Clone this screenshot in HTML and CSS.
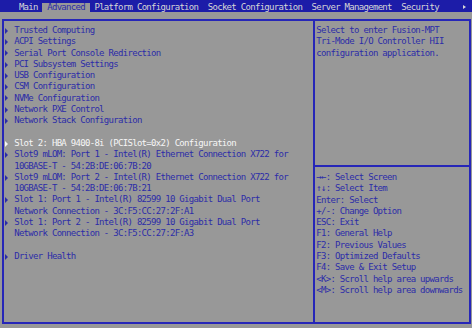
FILE: index.html
```html
<!DOCTYPE html>
<html lang="en">

<head>
    <meta charset="UTF-8">
    <title>Aptio Setup - Advanced</title>
    <link rel="stylesheet" href="styles.css">
</head>

<body>
    <div class="menubar">
        <span class="menu">    Main </span><span class="menu tab"> Advanced </span><span class="menu"> Platform Configuration  Socket Configuration  Server Management  Security     </span><span class="more"></span>
    </div>

    <div class="frame">
        <div class="left">
            <div class="item"><span class="arr"></span><span class="text">Trusted Computing</span></div>
            <div class="item"><span class="arr"></span><span class="text">ACPI Settings</span></div>
            <div class="item"><span class="arr"></span><span class="text">Serial Port Console Redirection</span></div>
            <div class="item"><span class="arr"></span><span class="text">PCI Subsystem Settings</span></div>
            <div class="item"><span class="arr"></span><span class="text">USB Configuration</span></div>
            <div class="item"><span class="arr"></span><span class="text">CSM Configuration</span></div>
            <div class="item"><span class="arr"></span><span class="text">NVMe Configuration</span></div>
            <div class="item"><span class="arr"></span><span class="text">Network PXE Control</span></div>
            <div class="item"><span class="arr"></span><span class="text">Network Stack Configuration</span></div>
            <div class="blank"></div>
            <div class="item active"><span class="arr"></span><span class="text">Slot 2: HBA 9400-8i (PCISlot=0x2) Configuration</span></div>
            <div class="item"><span class="arr"></span><span class="text">Slot9 mLOM: Port 1 - Intel(R) Ethernet Connection X722 for<br>10GBASE-T - 54:2B:DE:06:7B:20</span></div>
            <div class="item"><span class="arr"></span><span class="text">Slot9 mLOM: Port 2 - Intel(R) Ethernet Connection X722 for<br>10GBASE-T - 54:2B:DE:06:7B:21</span></div>
            <div class="item"><span class="arr"></span><span class="text">Slot 1: Port 1 - Intel(R) 82599 10 Gigabit Dual Port<br>Network Connection - 3C:F5:CC:27:2F:A1</span></div>
            <div class="item"><span class="arr"></span><span class="text">Slot 1: Port 2 - Intel(R) 82599 10 Gigabit Dual Port<br>Network Connection - 3C:F5:CC:27:2F:A3</span></div>
            <div class="blank"></div>
            <div class="item"><span class="arr"></span><span class="text">Driver Health</span></div>
        </div>

        <div class="right">
            <div class="help">Select to enter Fusion-MPT
Tri-Mode I/O Controller HII
configuration application.</div>
            <div class="keys">→←: Select Screen
↑↓: Select Item
Enter: Select
+/-: Change Option
ESC: Exit
F1: General Help
F2: Previous Values
F3: Optimized Defaults
F4: Save &amp; Exit Setup
&lt;K&gt;: Scroll help area upwards
&lt;M&gt;: Scroll help area downwards</div>
        </div>
    </div>
</body>

</html>
```

FILE: styles.css
```css
:root {
    --bios-grey: #989898;
    --bios-blue: #2c2ca8;
    --bios-bar: #1c1ca8;
    --bios-line: #2626b8;
    --bios-light: #d6d6d6;
    --bios-white: #f6f6f6;

    /* one text cell of the 100 column screen */
    --cell-w: 4.72px;
    --cell-h: 11.3px;
}

body {
    margin: 0;
    width: 472px;
    height: 328px;
    overflow: hidden;
    background: var(--bios-grey);
    color: var(--bios-blue);
    font-family: "DejaVu Sans Mono", monospace;
    font-size: 9px;
    letter-spacing: -0.698px;
    line-height: var(--cell-h);
}

.menubar {
    display: flex;
    height: 12px;
    padding-top: 2.7px;
    box-sizing: border-box;
    background: var(--bios-bar);
    color: var(--bios-light);
    white-space: pre;
}

.menu {
    height: 9.3px;
    line-height: 9.3px;
}

.tab {
    background: var(--bios-grey);
    color: var(--bios-blue);
}

.more {
    display: flex;
    align-items: center;
    justify-content: center;
    width: var(--cell-w);
    height: 9.3px;
}

.more::before {
    content: "";
    border-left: 3px solid var(--bios-light);
    border-top: 2.5px solid transparent;
    border-bottom: 2.5px solid transparent;
}

.frame {
    display: flex;
    margin: 7px 0 0 2px;
    width: 469px;
    height: 305px;
    box-sizing: border-box;
    border: 2px solid var(--bios-line);
}

.left {
    width: 309px;
    padding: 4px 0 0 0.72px;
    box-sizing: border-box;
}

.item {
    display: flex;
}

.item.active {
    color: var(--bios-white);
}

.text {
    white-space: pre;
}

.arr {
    display: flex;
    align-items: center;
    flex-shrink: 0;
    width: calc(var(--cell-w) * 2);
    height: var(--cell-h);
    padding-left: 0.5px;
    box-sizing: border-box;
}

.arr::before {
    content: "";
    border-left: 3.5px solid currentColor;
    border-top: 3px solid transparent;
    border-bottom: 3px solid transparent;
}

.blank {
    height: var(--cell-h);
}

.right {
    flex: 1;
    display: flex;
    flex-direction: column;
    border-left: 2px solid var(--bios-line);
}

.help,
.keys {
    white-space: pre;
}

.help {
    height: 146px;
    box-sizing: border-box;
    padding: 4px 0 0 1.24px;
    border-bottom: 2px solid var(--bios-line);
}

.keys {
    padding: 5px 0 0 1.24px;
}
```
